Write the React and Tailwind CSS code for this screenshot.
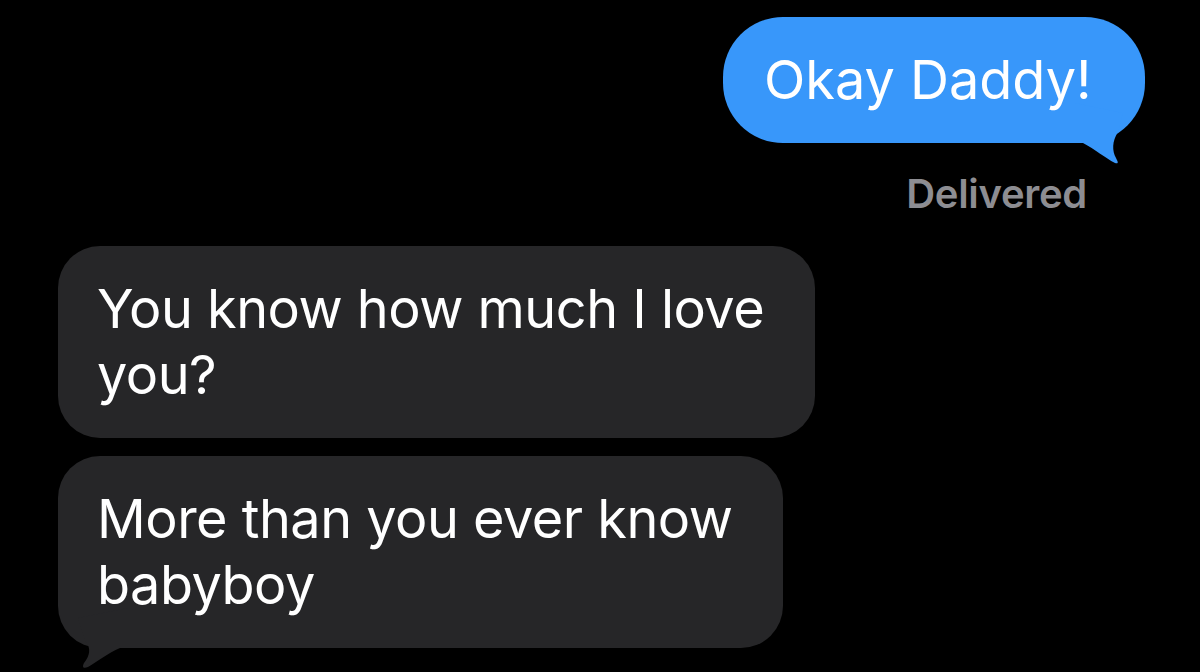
import React from 'react';

const font = { fontFamily: 'Inter, "Liberation Sans", sans-serif' };

function BlueTail() {
    return (
        <svg className="absolute right-0 bottom-[-40px] w-[80px] h-[80px]" viewBox="-80 -40 80 80" fill="#3897fa">
            <path d="M -70 -40 L -22 -30 L -27 -11 C -33 -2 -33 8 -29 15 C -27 19 -26 21 -30 20 C -40 15 -50 6 -62 0 L -70 0 Z" />
        </svg>
    );
}

function GreyTail() {
    return (
        <svg className="absolute left-0 bottom-[-40px] w-[80px] h-[80px]" viewBox="0 -40 80 80" fill="#262628">
            <path d="M 70 -40 L 20 -30 L 28 -6 C 33 0 32 8 26 15 C 24 19 25 21 30 19 C 40 13 50 5 62 0 L 70 0 Z" />
        </svg>
    );
}

function Incoming({ lines, width, tail }) {
    return (
        <div className={`relative ${width} rounded-[42px] bg-[#262628] pl-[39px] py-[30px] text-white text-[54px] leading-[66px] tracking-[-0.5px]`}>
            {lines.map((l, i) => <div key={i} className="whitespace-nowrap">{l}</div>)}
            {tail && <GreyTail />}
        </div>
    );
}

export default function App() {
    return (
        <div className="w-full h-[672px] bg-black overflow-hidden flex flex-col" style={font}>
            <div className="flex justify-end pr-[55px] pt-[17px]">
                <div className="relative w-[422px] h-[126px] rounded-[60px] bg-[#3897fa] pl-[41px] py-[30px] text-white text-[54px] leading-[66px] whitespace-nowrap">
                    Okay Daddy!
                    <BlueTail />
                </div>
            </div>
            <div className="flex justify-end pr-[113px] mt-[27px]">
                <span className="text-[40px] leading-[48px] font-semibold text-[#8d8d92] tracking-[-0.3px]">Delivered</span>
            </div>
            <div className="flex flex-col gap-[18px] pl-[58px] mt-[28px]">
                <Incoming lines={['You know how much I love', 'you?']} width="w-[757px]" />
                <Incoming lines={['More than you ever know', 'babyboy']} width="w-[725px]" tail />
            </div>
        </div>
    );
}
